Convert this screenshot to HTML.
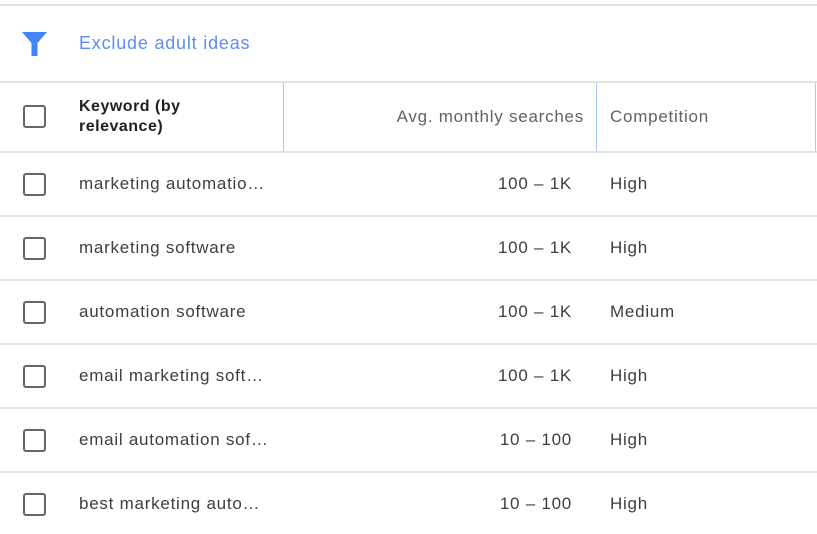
<!DOCTYPE html>
<html><head><style>
body{margin:0;width:817px;height:534px;background:#fff;font-family:"Liberation Sans",Arial,sans-serif;position:relative;overflow:hidden;color:#3c4043}
.h{position:absolute;left:0;width:817px;height:2px;background:#e3e3e3}
.v{position:absolute;width:1px;background:#a8c7fa}
.cb{position:absolute;left:23px;width:19px;height:19px;border:2px solid #666;border-radius:3px}
.t{position:absolute;font-size:17px;line-height:20px;white-space:nowrap;letter-spacing:0.75px}
</style></head><body>
<div class="h" style="top:4px"></div>
<svg style="position:absolute;left:22px;top:31px" width="26" height="26" viewBox="0 0 26 26"><path d="M0 1H25L15.5 12V25H9.5V12Z" fill="#4285f4"/></svg>
<div class="t" style="left:79px;top:33px;color:#5c8ff2;font-size:18px;letter-spacing:0.8px">Exclude adult ideas</div>
<div class="h" style="top:81px"></div>
<div class="v" style="left:283px;top:83px;height:69px"></div>
<div class="v" style="left:596px;top:83px;height:69px"></div>
<div class="v" style="left:815px;top:83px;height:69px"></div>
<div class="cb" style="top:105px"></div>
<div class="t" style="left:79px;top:97px;font-weight:bold;color:#202124;font-size:16px;line-height:20px;letter-spacing:0.5px">Keyword (by<br>relevance)</div>
<div class="t" style="right:233px;top:107px;color:#5f6368">Avg. monthly searches</div>
<div class="t" style="left:610px;top:107px;color:#5f6368">Competition</div>
<div class="h" style="top:151px"></div>

<div class="cb" style="top:173px"></div><div class="t" style="left:79px;top:174px">marketing automatio…</div><div class="t" style="right:245px;top:174px">100 – 1K</div><div class="t" style="left:610px;top:174px">High</div>
<div class="h" style="top:215px"></div>
<div class="cb" style="top:237px"></div><div class="t" style="left:79px;top:238px">marketing software</div><div class="t" style="right:245px;top:238px">100 – 1K</div><div class="t" style="left:610px;top:238px">High</div>
<div class="h" style="top:279px"></div>
<div class="cb" style="top:301px"></div><div class="t" style="left:79px;top:302px">automation software</div><div class="t" style="right:245px;top:302px">100 – 1K</div><div class="t" style="left:610px;top:302px">Medium</div>
<div class="h" style="top:343px"></div>
<div class="cb" style="top:365px"></div><div class="t" style="left:79px;top:366px">email marketing soft…</div><div class="t" style="right:245px;top:366px">100 – 1K</div><div class="t" style="left:610px;top:366px">High</div>
<div class="h" style="top:407px"></div>
<div class="cb" style="top:429px"></div><div class="t" style="left:79px;top:430px">email automation sof…</div><div class="t" style="right:245px;top:430px">10 – 100</div><div class="t" style="left:610px;top:430px">High</div>
<div class="h" style="top:471px"></div>
<div class="cb" style="top:493px"></div><div class="t" style="left:79px;top:494px">best marketing auto…</div><div class="t" style="right:245px;top:494px">10 – 100</div><div class="t" style="left:610px;top:494px">High</div>
</body></html>
